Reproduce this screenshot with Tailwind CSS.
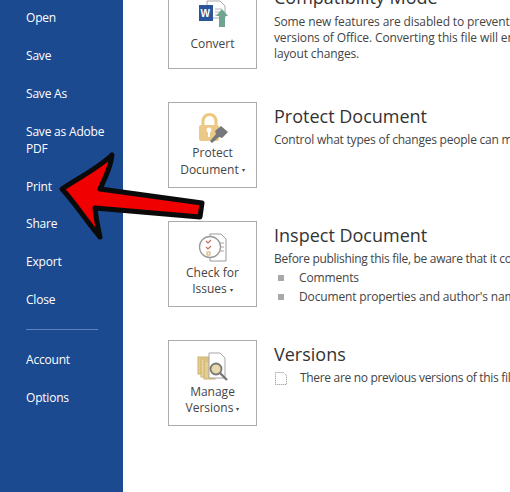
<!DOCTYPE html>
<html lang="en">
<head>
    <meta charset="UTF-8">
    <title>Info</title>
    <script src="https://cdn.jsdelivr.net/npm/@tailwindcss/browser@4"></script>
</head>
<body class="relative flex h-[492px] w-[510px] overflow-hidden bg-white font-['Open_Sans',sans-serif]">

    <!-- backstage menu -->
    <nav class="h-full w-[123px] shrink-0 bg-[#1c4a91] pl-[26px] pt-[9px] text-[12px] leading-[17px] tracking-[-0.2px] text-white">
        <div class="h-[38px]">Open</div>
        <div class="h-[38px]">Save</div>
        <div class="h-[38px]">Save As</div>
        <div class="h-[55px]">Save as Adobe<br>PDF</div>
        <div class="h-[37px]">Print</div>
        <div class="h-[38px]">Share</div>
        <div class="h-[38px]">Export</div>
        <div class="h-[38px]">Close</div>
        <div class="mb-[21px] h-px w-[72px] bg-[#5f83b8]"></div>
        <div class="h-[38px]">Account</div>
        <div class="h-[38px]">Options</div>
    </nav>

    <!-- info sections -->
    <main class="-mt-[17px] flex min-w-0 flex-1 flex-col gap-[33px] overflow-hidden pl-[45px] text-[#444]">

        <section class="flex h-[86px] shrink-0 gap-[17px]">
            <div class="flex h-[86px] w-[89px] shrink-0 flex-col items-center border border-[#ababab] pt-[16px] text-[12px] leading-[16px]">
                <svg class="h-[30px] w-[34px]" viewBox="0 0 34 30">
                    <path d="M11 1h13l5 5v12H11z" fill="#fff" stroke="#a8a8a8"/>
                    <path d="M19 9h7M19 12h7M19 15h4" stroke="#b5b5b5"/>
                    <rect x="3" y="5" width="14" height="16" fill="#2a5699"/>
                    <text x="4.5" y="16.5" font-size="10" font-weight="700" fill="#fff" font-family="Liberation Sans">W</text>
                    <path d="M26 9l6 7h-3v11h-6V16h-3z" fill="#6fa58e"/>
                </svg>
                <span class="mt-[6px]">Convert</span>
            </div>
            <div class="min-w-0 whitespace-nowrap">
                <h2 class="mt-[2px] text-[18px] leading-[24px] text-[#333]">Compatibility Mode</h2>
                <p class="mt-[5px] text-[12px] leading-[16px] tracking-[-0.12px]">Some new features are disabled to prevent problems<br>versions of Office. Converting this file will enable<br>layout changes.</p>
            </div>
        </section>

        <section class="flex h-[86px] shrink-0 gap-[17px]">
            <div class="flex h-[86px] w-[89px] shrink-0 flex-col items-center border border-[#ababab] pt-[10px] text-center text-[12px] leading-[17px]">
                <svg class="h-[30px] w-[34px]" viewBox="0 0 34 30">
                    <path d="M7 12V8a6.5 6.5 0 0 1 13 0v4" fill="none" stroke="#ecc77e" stroke-width="3"/>
                    <rect x="3" y="12" width="20" height="16" rx="2" fill="#edc987"/>
                    <circle cx="13" cy="17" r="2.5" fill="#fff"/>
                    <path d="M12 18h2v6h-2z" fill="#fff"/>
                    <path d="M25 13l7 6-6 6-3-1-7 6-2-2 6-7-1-3z" fill="#77787b"/>
                </svg>
                <span class="mt-[1px]">Protect<br>Document <span class="align-middle text-[6px]">▾</span></span>
            </div>
            <div class="min-w-0 whitespace-nowrap">
                <h2 class="mt-[2px] text-[18px] leading-[24px] text-[#333]">Protect Document</h2>
                <p class="mt-[4px] text-[12px] leading-[16px] tracking-[-0.22px]">Control what types of changes people can make to</p>
            </div>
        </section>

        <section class="flex h-[86px] shrink-0 gap-[17px]">
            <div class="flex h-[86px] w-[89px] shrink-0 flex-col items-center border border-[#ababab] pt-[11px] text-center text-[12px] leading-[16px]">
                <svg class="h-[30px] w-[32px]" viewBox="0 0 32 30">
                    <path d="M13 1h11l5 5v22H13z" fill="#fff" stroke="#9a9a9a"/>
                    <path d="M23 10h4M23 14h4M23 18h4" stroke="#a8a8a8"/>
                    <circle cx="13" cy="14" r="10.5" fill="#fff" stroke="#9a9a9a" stroke-width="1.3"/>
                    <path d="M9 8l2 2 3-3M9 14l2 2 3-3" fill="none" stroke="#c9705c" stroke-width="1.2"/>
                    <rect x="10" y="19" width="3" height="3" fill="none" stroke="#d3a76a"/>
                </svg>
                <span class="mt-[2px]">Check for<br>Issues <span class="align-middle text-[6px]">▾</span></span>
            </div>
            <div class="min-w-0 whitespace-nowrap">
                <h2 class="mt-[2px] text-[18px] leading-[24px] text-[#333]">Inspect Document</h2>
                <p class="mt-[4px] text-[12px] leading-[16px] tracking-[-0.3px]">Before publishing this file, be aware that it contains:</p>
                <ul class="mt-[1px] text-[12px] leading-[19px] tracking-[-0.15px]">
                    <li class="flex items-center gap-[15px]"><span class="ml-[4px] h-[6px] w-[6px] shrink-0 bg-[#a9a9a9]"></span>Comments</li>
                    <li class="flex items-center gap-[15px]"><span class="ml-[4px] h-[6px] w-[6px] shrink-0 bg-[#a9a9a9]"></span>Document properties and author's name</li>
                </ul>
            </div>
        </section>

        <section class="flex h-[86px] shrink-0 gap-[17px]">
            <div class="flex h-[86px] w-[89px] shrink-0 flex-col items-center border border-[#ababab] pt-[11px] text-center text-[12px] leading-[16px]">
                <svg class="h-[30px] w-[32px]" viewBox="0 0 32 30">
                    <rect x="1" y="5" width="11" height="17" fill="#e3cd8f" stroke="#cdb26a"/>
                    <rect x="4" y="7" width="11" height="18" fill="#e8d59f" stroke="#cdb26a"/>
                    <rect x="7" y="9" width="11" height="18" fill="#e3cd8f" stroke="#cdb26a"/>
                    <path d="M12 1h11l5 5v20H12z" fill="#fff" stroke="#a5a5a5"/>
                    <circle cx="19" cy="17" r="5.5" fill="#e9d9ab" stroke="#777" stroke-width="1.8"/>
                    <path d="M23 21l7 7" stroke="#777" stroke-width="2.4"/>
                </svg>
                <span class="mt-[2px]">Manage<br>Versions <span class="align-middle text-[6px]">▾</span></span>
            </div>
            <div class="min-w-0 whitespace-nowrap">
                <h2 class="mt-[2px] text-[18px] leading-[24px] text-[#333]">Versions</h2>
                <div class="mt-[4px] flex items-center gap-[12px] text-[12px] leading-[16px] tracking-[-0.32px]">
                    <svg class="h-[15px] w-[14px] shrink-0" viewBox="0 0 14 15">
                        <path d="M1.5 1.5h8l3 3v9h-11z" fill="none" stroke="#8a8a8a" stroke-dasharray="1 1"/>
                    </svg>
                    <span>There are no previous versions of this file.</span>
                </div>
            </div>
        </section>
    </main>

    <!-- red callout arrow -->
    <svg class="absolute left-0 top-0 h-[492px] w-[510px]" viewBox="0 0 510 492">
        <path d="M62 189C82 176 98 168 112 155C111 167 105 178 100 189L202 203L200 217L95 208C96 218 98 228 100 237C87 222 76 204 62 189Z" fill="#f00000" stroke="#0a0a0a" stroke-width="5" stroke-linejoin="round"/>
    </svg>
</body>
</html>
